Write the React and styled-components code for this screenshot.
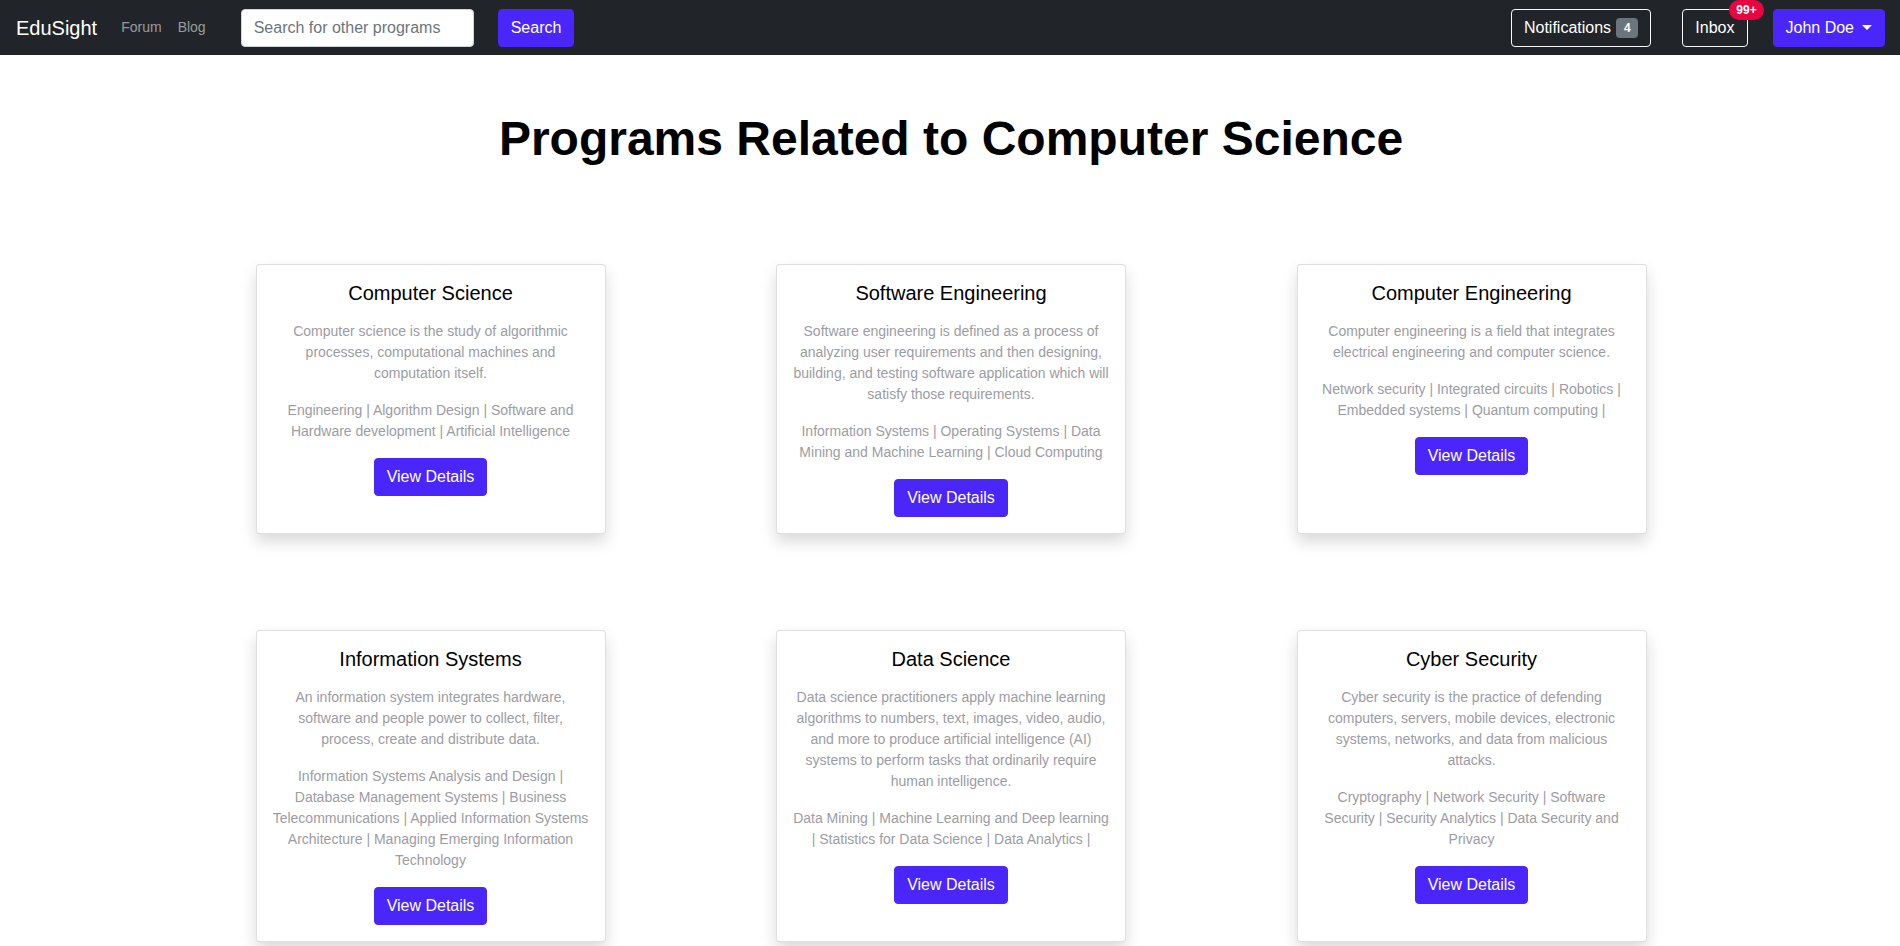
import React from 'react';
import styled, { createGlobalStyle } from 'styled-components';

const GlobalStyle = createGlobalStyle`
  * {
    box-sizing: border-box;
  }
  body {
    margin: 0;
    background: #fff;
    color: #212529;
    font-family: 'Liberation Sans', Arial, sans-serif;
    font-size: 16px;
    line-height: 1.5;
  }
`;

const PURPLE = '#4b26fb';

const Nav = styled.nav`
  height: 55px;
  padding: 0 15px 0 16px;
  background: #212529;
  display: flex;
  align-items: center;
`;

const Brand = styled.a`
  color: #fff;
  font-size: 20px;
  text-decoration: none;
  margin-right: 16px;
`;

const NavLink = styled.a`
  color: rgba(255, 255, 255, 0.55);
  font-size: 14px;
  padding: 8px;
  text-decoration: none;
`;

const SearchForm = styled.form`
  display: flex;
  align-items: center;
  gap: 24px;
  margin: 0 0 0 27px;
`;

const SearchInput = styled.input`
  width: 233px;
  height: 38px;
  padding: 6px 12px;
  border: 1px solid #ced4da;
  border-radius: 4px;
  font: inherit;
  color: #212529;
  &::placeholder {
    color: #6c757d;
  }
`;

const Button = styled.button`
  position: relative;
  display: inline-flex;
  align-items: center;
  height: 38px;
  padding: 6px 12px;
  font-family: inherit;
  font-size: 16px;
  line-height: 1.5;
  color: #fff;
  border-radius: 4px;
  cursor: pointer;
  background: ${(p) => (p.$outline ? 'transparent' : PURPLE)};
  border: 1px solid ${(p) => (p.$outline ? '#f8f9fa' : PURPLE)};
`;

const Actions = styled.div`
  margin-left: auto;
  display: flex;
  align-items: center;
  gap: 31px;
  & > :last-child {
    margin-left: -6px;
  }
`;

const Badge = styled.span`
  display: inline-block;
  margin-left: 5px;
  padding: 4px 7.8px;
  font-size: 12px;
  font-weight: 700;
  line-height: 1;
  border-radius: 4px;
  background: #6c757d;
  color: #fff;
`;

const CornerBadge = styled(Badge)`
  position: absolute;
  top: 0;
  left: 100%;
  margin: 0;
  border-radius: 10px;
  background: #e7063f;
  transform: translate(-50%, -50%);
`;

const Caret = styled.span`
  display: inline-block;
  margin-left: 8px;
  border-top: 5px solid #fff;
  border-left: 5px solid transparent;
  border-right: 5px solid transparent;
`;

const Main = styled.main`
  padding: 55px 0 40px 2px;
`;

const Heading = styled.h1`
  margin: 0;
  text-align: center;
  font-size: 48px;
  font-weight: 700;
  line-height: 1.2;
  color: #000;
`;

const Grid = styled.div`
  display: grid;
  grid-template-columns: repeat(3, 520.5px);
  justify-content: center;
  justify-items: center;
  row-gap: 96px;
  margin-top: 96px;
`;

const Card = styled.div`
  width: 350px;
  padding: 16px;
  text-align: center;
  background: #fff;
  border: 1px solid rgba(0, 0, 0, 0.125);
  border-radius: 4px;
  box-shadow: 0 8px 16px rgba(0, 0, 0, 0.15);
`;

const CardTitle = styled.h5`
  margin: 0 0 16px;
  font-size: 20px;
  font-weight: 400;
  line-height: 1.2;
  color: #000;
`;

const CardText = styled.p`
  margin: 0 0 16px;
  font-size: 14px;
  line-height: 21px;
  color: #9c9ca4;
`;

const programs = [
  {
    name: 'Computer Science',
    text: 'Computer science is the study of algorithmic processes, computational machines and computation itself.',
    tags: 'Engineering | Algorithm Design | Software and Hardware development | Artificial Intelligence',
  },
  {
    name: 'Software Engineering',
    text: 'Software engineering is defined as a process of analyzing user requirements and then designing, building, and testing software application which will satisfy those requirements.',
    tags: 'Information Systems | Operating Systems | Data Mining and Machine Learning | Cloud Computing',
  },
  {
    name: 'Computer Engineering',
    text: 'Computer engineering is a field that integrates electrical engineering and computer science.',
    tags: 'Network security | Integrated circuits | Robotics | Embedded systems | Quantum computing |',
  },
  {
    name: 'Information Systems',
    text: 'An information system integrates hardware, software and people power to collect, filter, process, create and distribute data.',
    tags: 'Information Systems Analysis and Design | Database Management Systems | Business Telecommunications | Applied Information Systems Architecture | Managing Emerging Information Technology',
  },
  {
    name: 'Data Science',
    text: 'Data science practitioners apply machine learning algorithms to numbers, text, images, video, audio, and more to produce artificial intelligence (AI) systems to perform tasks that ordinarily require human intelligence.',
    tags: 'Data Mining | Machine Learning and Deep learning | Statistics for Data Science | Data Analytics |',
  },
  {
    name: 'Cyber Security',
    text: 'Cyber security is the practice of defending computers, servers, mobile devices, electronic systems, networks, and data from malicious attacks.',
    tags: 'Cryptography | Network Security | Software Security | Security Analytics | Data Security and Privacy',
  },
];

export default function App() {
  return (
    <>
      <GlobalStyle />
      <Nav>
        <Brand href="#">EduSight</Brand>
        <NavLink href="#">Forum</NavLink>
        <NavLink href="#">Blog</NavLink>
        <SearchForm onSubmit={(e) => e.preventDefault()}>
          <SearchInput placeholder="Search for other programs" />
          <Button type="submit">Search</Button>
        </SearchForm>
        <Actions>
          <Button $outline>
            Notifications<Badge>4</Badge>
          </Button>
          <Button $outline>
            Inbox<CornerBadge>99+</CornerBadge>
          </Button>
          <Button>
            John Doe<Caret />
          </Button>
        </Actions>
      </Nav>
      <Main>
        <Heading>Programs Related to Computer Science</Heading>
        <Grid>
          {programs.map((p) => (
            <Card key={p.name}>
              <CardTitle>{p.name}</CardTitle>
              <CardText>{p.text}</CardText>
              <CardText>{p.tags}</CardText>
              <Button>View Details</Button>
            </Card>
          ))}
        </Grid>
      </Main>
    </>
  );
}
